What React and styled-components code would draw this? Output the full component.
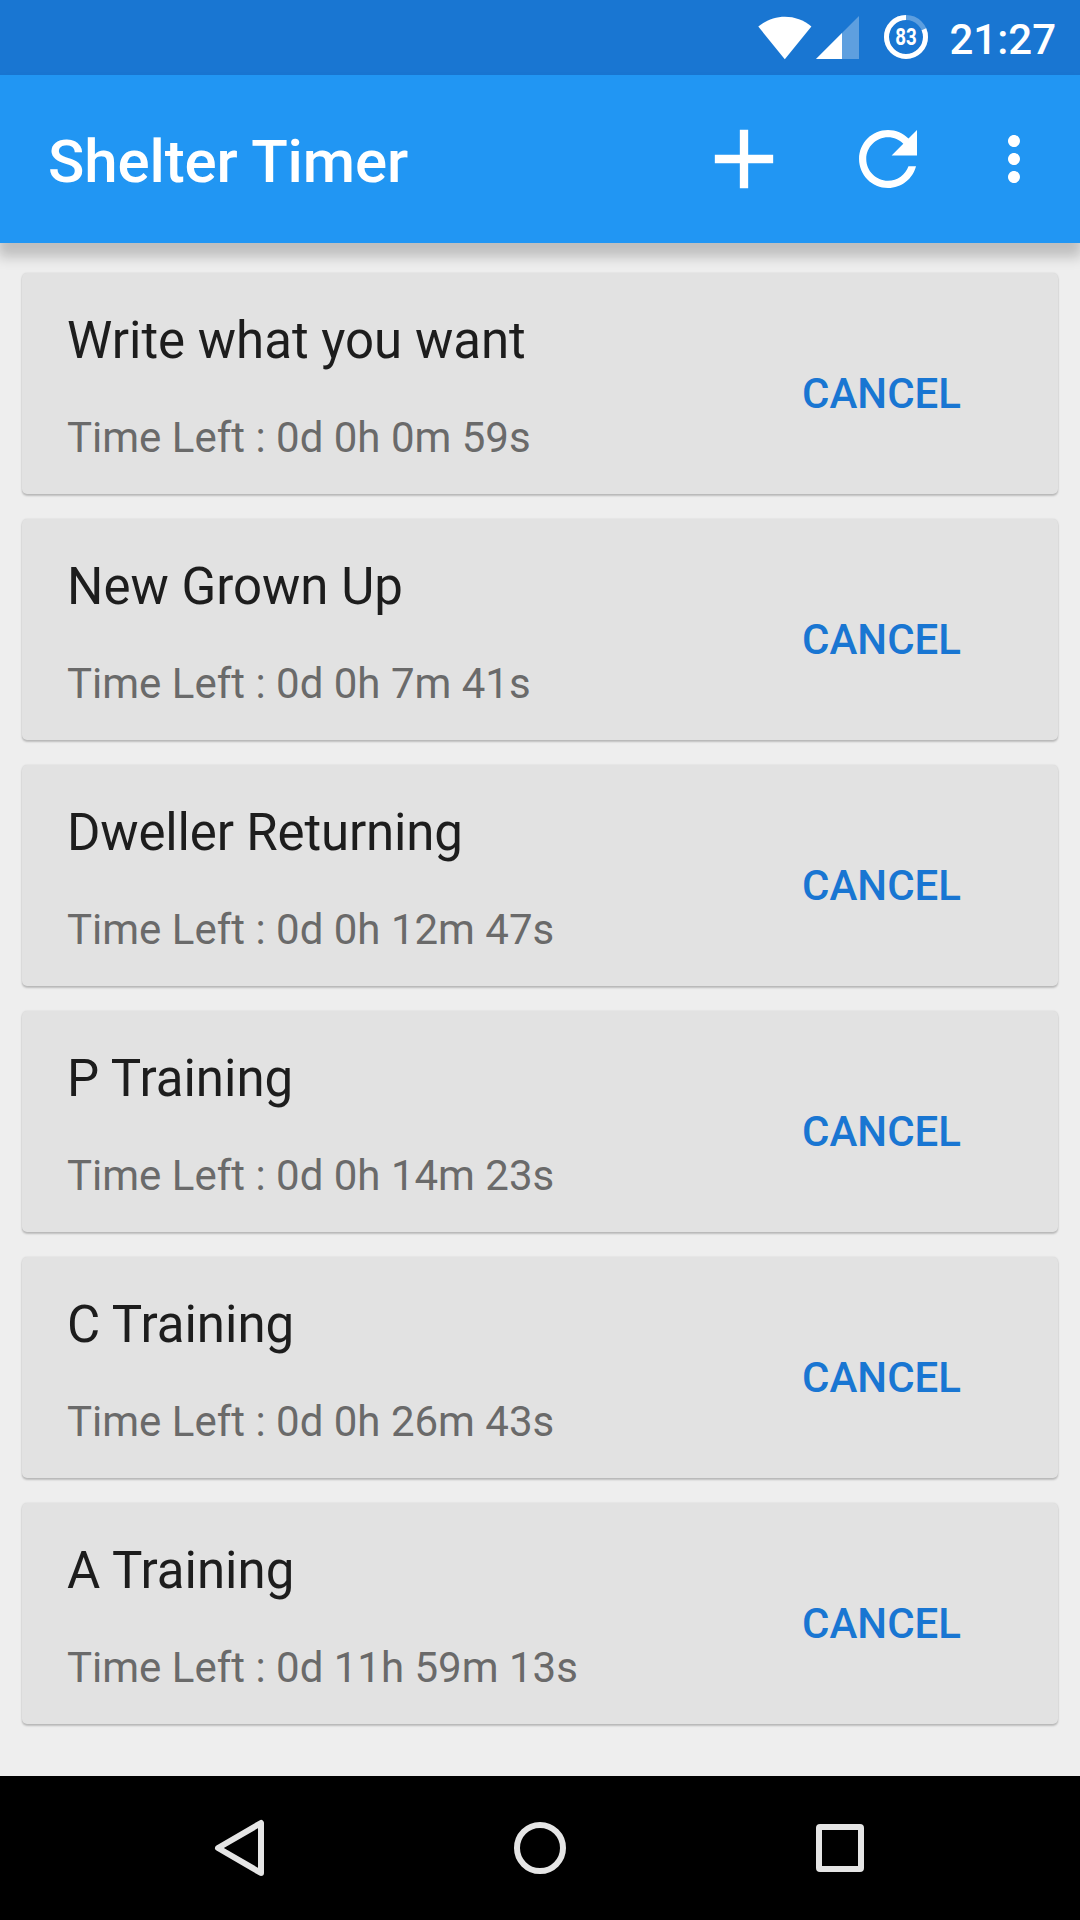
import React from "react";
import styled, { createGlobalStyle } from "styled-components";

const timers = [
  { name: "Write what you want", left: "0d 0h 0m 59s" },
  { name: "New Grown Up", left: "0d 0h 7m 41s" },
  { name: "Dweller Returning", left: "0d 0h 12m 47s", tracking: -0.16 },
  { name: "P Training", left: "0d 0h 14m 23s" },
  { name: "C Training", left: "0d 0h 26m 43s" },
  { name: "A Training", left: "0d 11h 59m 13s" },
];

const WifiIcon = () => (
  <svg width="54" height="44" viewBox="0 0 54 44">
    <path d="M0.3 10.6 C15.5 -2.6 38.5 -2.6 53.4 10.6 L26.8 43.2 Z" fill="#fff" />
  </svg>
);

const SignalIcon = () => (
  <svg width="43" height="43" viewBox="0 0 43 43">
    <path d="M0 43 L43 0 V43 Z" fill="#fff" fillOpacity="0.3" />
    <path d="M0 43 L26 17 V43 Z" fill="#fff" />
  </svg>
);

const BatteryIcon = () => (
  <svg width="44" height="44" viewBox="0 0 44 44">
    <circle cx="22" cy="22" r="19.5" fill="none" stroke="#fff" strokeOpacity="0.3" strokeWidth="5" />
    <circle
      cx="22"
      cy="22"
      r="19.5"
      fill="none"
      stroke="#fff"
      strokeWidth="5"
      pathLength="100"
      strokeDasharray="81.5 100"
      transform="matrix(0 -1 -1 0 44 44)"
    />
    <text
      x="22"
      y="30"
      fill="#fff"
      fontSize="23"
      fontWeight="700"
      textAnchor="middle"
      textLength="21.5"
      lengthAdjust="spacingAndGlyphs"
    >
      83
    </text>
  </svg>
);

const AddIcon = () => (
  <svg width="100" height="100" viewBox="0 0 24 24" fill="#fff">
    <path d="M19 13h-6v6h-2v-6H5v-2h6V5h2v6h6v2z" />
  </svg>
);

const RefreshIcon = () => (
  <svg width="88" height="88" viewBox="-0.138 -0.138 24.276 24.276" fill="#fff">
    <path d="M17.65 6.35C16.2 4.9 14.21 4 12 4c-4.42 0-7.99 3.58-7.99 8s3.57 8 7.99 8c3.73 0 6.84-2.55 7.73-6h-2.08c-.82 2.33-3.04 4-5.65 4-3.31 0-6-2.69-6-6s2.69-6 6-6c1.66 0 3.14.69 4.22 1.78L13 11h7V4l-2.35 2.35z" />
  </svg>
);

const MoreIcon = () => (
  <svg width="72" height="72" viewBox="0 0 24 24" fill="#fff">
    <path d="M12 8c1.1 0 2-.9 2-2s-.9-2-2-2-2 .9-2 2 .9 2 2 2zm0 2c-1.1 0-2 .9-2 2s.9 2 2 2 2-.9 2-2-.9-2-2-2zm0 6c-1.1 0-2 .9-2 2s.9 2 2 2 2-.9 2-2-.9-2-2-2z" />
  </svg>
);

const NavIcon = ({ children }) => (
  <svg
    width="72"
    height="72"
    viewBox="0 0 72 72"
    fill="none"
    stroke="#e5e5e5"
    strokeWidth="6"
    strokeLinejoin="round"
  >
    {children}
  </svg>
);

const App = () => {
  return (
    <Screen>
      <GlobalStyle />
      <StatusBar>
        <WifiIcon />
        <SignalIcon />
        <BatteryWrap>
          <BatteryIcon />
        </BatteryWrap>
        <Clock>21:27</Clock>
      </StatusBar>

      <Toolbar>
        <Title>Shelter Timer</Title>
        <Action aria-label="Add" $width={100} $gap={50}>
          <AddIcon />
        </Action>
        <Action aria-label="Refresh" $width={88} $gap={46}>
          <RefreshIcon />
        </Action>
        <Action aria-label="More" $width={72} $gap={30}>
          <MoreIcon />
        </Action>
      </Toolbar>

      <TimerList>
        {timers.map((timer) => (
          <Card key={timer.name}>
            <CardText>
              <TimerName $tracking={timer.tracking}>{timer.name}</TimerName>
              <TimeLeft>Time Left : {timer.left}</TimeLeft>
            </CardText>
            <CancelButton>CANCEL</CancelButton>
          </Card>
        ))}
      </TimerList>

      <NavBar>
        <NavButton aria-label="Back">
          <NavIcon>
            <path d="M14 36 L57 11 V61 Z" />
          </NavIcon>
        </NavButton>
        <NavButton aria-label="Home">
          <NavIcon>
            <circle cx="36" cy="36" r="23" />
          </NavIcon>
        </NavButton>
        <NavButton aria-label="Recent apps">
          <NavIcon>
            <rect x="15" y="15" width="42" height="42" rx="1" />
          </NavIcon>
        </NavButton>
      </NavBar>
    </Screen>
  );
};

export default App;

const GlobalStyle = createGlobalStyle`
  * {
    box-sizing: border-box;
  }

  body {
    margin: 0;
    font-family: Roboto, "Liberation Sans", sans-serif;
  }

  svg {
    display: block;
    flex-shrink: 0;
  }

  button {
    border: none;
    background: none;
    padding: 0;
    font-family: inherit;
  }
`;

const Screen = styled.div`
  display: flex;
  flex-direction: column;
  width: 1080px;
  height: 1920px;
  background-color: #eeeeee;
  overflow: hidden;
`;

const StatusBar = styled.header`
  display: flex;
  align-items: flex-start;
  justify-content: flex-end;
  gap: 4px;
  height: 75px;
  padding: 15.5px 24px 0 0;
  background-color: #1976d2;
`;

const BatteryWrap = styled.div`
  margin: -0.5px 17px 0 21px;
`;

const Clock = styled.span`
  font-size: 42px;
  font-weight: 500;
  line-height: 48px;
  color: #fff;
`;

const Toolbar = styled.div`
  position: relative;
  z-index: 1;
  display: flex;
  align-items: center;
  height: 168px;
  padding-left: 48px;
  background-color: #2196f3;
  box-shadow: 0 12px 12px 2px rgba(0, 0, 0, 0.2);
`;

const Title = styled.h1`
  flex: 1;
  margin: 5px 0 0;
  font-size: 60px;
  font-weight: 500;
  line-height: 70px;
  letter-spacing: -0.1px;
  color: #fff;
`;

const Action = styled.button`
  width: ${(props) => props.$width}px;
  margin-right: ${(props) => props.$gap}px;
`;

const TimerList = styled.main`
  flex: 1;
  display: flex;
  flex-direction: column;
  gap: 25px;
  padding: 30px 22px 0;
`;

const Card = styled.section`
  display: flex;
  justify-content: space-between;
  height: 221px;
  padding: 0 97px 0 45px;
  border-radius: 5px;
  background-color: #e2e2e2;
  box-shadow: 0 2px 2px rgba(0, 0, 0, 0.2), 0 0 2px rgba(0, 0, 0, 0.12);
`;

const CardText = styled.div`
  padding-top: 38px;
`;

const TimerName = styled.h2`
  margin: 0;
  font-size: 51px;
  font-weight: 400;
  line-height: 60px;
  letter-spacing: ${(props) => props.$tracking || 0}px;
  color: #1d1d1d;
`;

const TimeLeft = styled.p`
  margin: 42px 0 0;
  font-size: 42px;
  line-height: 50px;
  color: #6a6a6a;
`;

const CancelButton = styled.button`
  align-self: flex-start;
  margin-top: 96px;
  font-size: 42px;
  font-weight: 500;
  line-height: 50px;
  color: #1976d2;
`;

const NavBar = styled.nav`
  display: flex;
  height: 144px;
  padding: 0 90px;
  background-color: #000;
`;

const NavButton = styled.button`
  flex: 1;
  display: flex;
  align-items: center;
  justify-content: center;
`;
